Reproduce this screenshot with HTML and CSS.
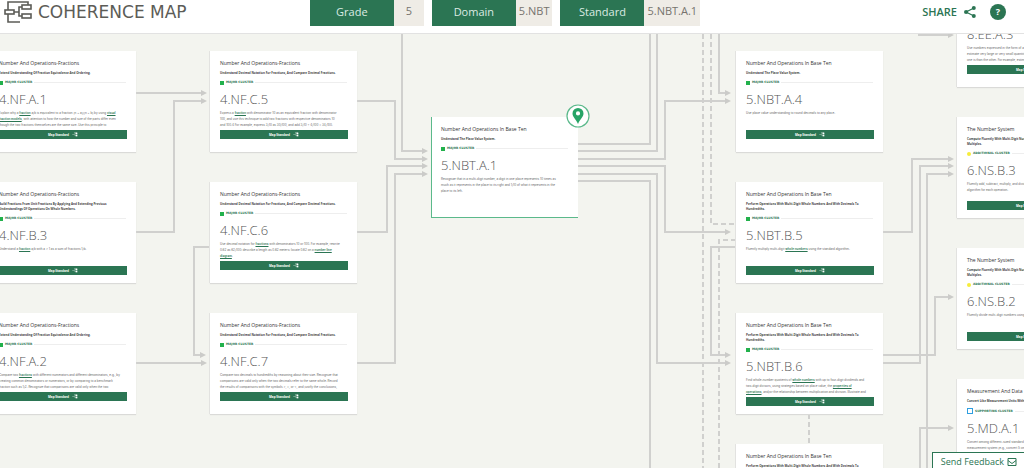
FILE: index.html
```html
<!DOCTYPE html>
<html lang="en">
<head>
<meta charset="utf-8">
<title>Coherence Map</title>
<link rel="stylesheet" href="styles.css">
</head>
<body>
<svg class="defs" aria-hidden="true">
  <symbol id="tree" viewBox="0 0 28 24">
    <g fill="none" stroke="currentColor" stroke-width="1.6">
      <path d="M1 12h10M18 7h-5v10h5M9 3h15"/>
      <rect x="18" y="4" width="9" height="6"/>
      <rect x="18" y="14" width="9" height="6"/>
    </g>
  </symbol>
</svg>
<header class="header">
  <a class="brand" href="#">
    <svg class="brand-icon" viewBox="0 0 28 24" aria-hidden="true">
      <g fill="none" stroke="#5c5c57" stroke-width="1.6">
        <path d="M4 10V2h20v3M4 14v8h12M10 12h5M18 7h-3v9h3"/>
        <rect x="1" y="10" width="9" height="4"/>
        <rect x="18" y="5" width="9" height="4"/>
        <rect x="18" y="14" width="9" height="4"/>
      </g>
    </svg>
    <span>COHERENCE MAP</span>
  </a>
  <nav class="crumbs">
    <div class="crumb"><button type="button">Grade</button><span>5</span></div>
    <div class="crumb"><button type="button">Domain</button><span>5.NBT</span></div>
    <div class="crumb"><button type="button">Standard</button><span>5.NBT.A.1</span></div>
  </nav>
  <div class="tools">
    <button class="share" type="button">SHARE
      <svg viewBox="0 0 12 12" aria-hidden="true"><path d="M10 2L2 6l8 4" fill="none" stroke="#2b7553" stroke-width="1.2"/><g fill="#2b7553"><circle cx="9.8" cy="2.1" r="2"/><circle cx="2.1" cy="6" r="2.1"/><circle cx="9.8" cy="9.9" r="2"/></g></svg>
    </button>
    <button class="help" type="button" aria-label="Help">?</button>
  </div>
</header>

<main class="map">
  <svg class="links" viewBox="0 34 1024 434" aria-hidden="true">
    <defs>
      <marker id="arrow" markerUnits="userSpaceOnUse" markerWidth="6" markerHeight="6" refX="1" refY="3" orient="auto"><path d="M0 0L6 3L0 6Z" fill="#cbcbc9"/></marker>
    </defs>
    <g class="solid arrows">
      <path d="M136 93H202"/>
      <path d="M136 232H174V101H202"/>
      <path d="M210 247H194V355H201"/>
      <path d="M136 363H202"/>
      <path d="M402 30V151H423"/>
      <path d="M357 101H395V159H423"/>
      <path d="M357 232H387V166H423"/>
      <path d="M357 363H395V174H423"/>
      <path d="M578 159H665V101H726"/>
      <path d="M578 166H665V232H726"/>
      <path d="M578 174H657V363H726"/>
      <path d="M719 30V93H726"/>
      <path d="M736 247H711V355H726"/>
      <path d="M883 232H912V159H949"/>
      <path d="M883 363H920V166H949"/>
      <path d="M927 468V174H949"/>
      <path d="M883 355H935V297H949"/>
      <path d="M920 468V428H949"/>
      <path d="M919 30V35H949"/>
    </g>
    <g class="solid">
      <path d="M578 144H650V30"/>
      <path d="M578 151H657V30"/>
      <path d="M578 181H650V468"/>
    </g>
    <g class="dashed">
      <path d="M703 34V468"/>
      <path d="M711 34V224H736"/>
      <path d="M736 240H719V468"/>
      <path d="M809 414V444"/>
    </g>
  </svg>

  <article class="card c0 r1">
    <h2>Number And Operations-Fractions</h2>
    <h3>Extend Understanding Of Fraction Equivalence And Ordering.</h3>
    <p class="cluster major">MAJOR CLUSTER</p>
    <p class="code">4.NF.A.1</p>
    <p class="text">Explain why a <a href="#">fraction</a> a/b is equivalent to a fraction (n × a)/(n × b) by using <a href="#">visual</a><br><a href="#">fraction models</a>, with attention to how the number and size of the parts differ even<br>though the two fractions themselves are the same size. Use this principle to</p>
    <button type="button">Map Standard <svg><use href="#tree"/></svg></button>
  </article>
  <article class="card c0 r2">
    <h2>Number And Operations-Fractions</h2>
    <h3>Build Fractions From Unit Fractions By Applying And Extending Previous<br>Understandings Of Operations On Whole Numbers.</h3>
    <p class="cluster major">MAJOR CLUSTER</p>
    <p class="code">4.NF.B.3</p>
    <p class="text">Understand a <a href="#">fraction</a> a/b with a &gt; 1 as a sum of fractions 1/b.</p>
    <button type="button">Map Standard <svg><use href="#tree"/></svg></button>
  </article>
  <article class="card c0 r3">
    <h2>Number And Operations-Fractions</h2>
    <h3>Extend Understanding Of Fraction Equivalence And Ordering.</h3>
    <p class="cluster major">MAJOR CLUSTER</p>
    <p class="code">4.NF.A.2</p>
    <p class="text">Compare two <a href="#">fractions</a> with different numerators and different denominators, e.g., by<br>creating common denominators or numerators, or by comparing to a benchmark<br>fraction such as 1/2. Recognize that comparisons are valid only when the two</p>
    <button type="button">Map Standard <svg><use href="#tree"/></svg></button>
  </article>

  <article class="card c1 r1">
    <h2>Number And Operations-Fractions</h2>
    <h3>Understand Decimal Notation For Fractions, And Compare Decimal Fractions.</h3>
    <p class="cluster major">MAJOR CLUSTER</p>
    <p class="code">4.NF.C.5</p>
    <p class="text">Express a <a href="#">fraction</a> with denominator 10 as an equivalent fraction with denominator<br>100, and use this technique to add two fractions with respective denominators 10<br>and 100.4 For example, express 3/10 as 30/100, and add 3/10 + 4/100 = 34/100.</p>
    <button type="button">Map Standard <svg><use href="#tree"/></svg></button>
  </article>
  <article class="card c1 r2">
    <h2>Number And Operations-Fractions</h2>
    <h3>Understand Decimal Notation For Fractions, And Compare Decimal Fractions.</h3>
    <p class="cluster major">MAJOR CLUSTER</p>
    <p class="code">4.NF.C.6</p>
    <p class="text">Use decimal notation for <a href="#">fractions</a> with denominators 10 or 100. For example, rewrite<br>0.62 as 62/100; describe a length as 0.62 meters; locate 0.62 on a <a href="#">number line</a><br><a href="#">diagram</a>.</p>
    <button type="button">Map Standard <svg><use href="#tree"/></svg></button>
  </article>
  <article class="card c1 r3">
    <h2>Number And Operations-Fractions</h2>
    <h3>Understand Decimal Notation For Fractions, And Compare Decimal Fractions.</h3>
    <p class="cluster major">MAJOR CLUSTER</p>
    <p class="code">4.NF.C.7</p>
    <p class="text">Compare two decimals to hundredths by reasoning about their size. Recognize that<br>comparisons are valid only when the two decimals refer to the same whole. Record<br>the results of comparisons with the symbols &gt;, =, or &lt;, and justify the conclusions,</p>
    <button type="button">Map Standard <svg><use href="#tree"/></svg></button>
  </article>

  <article class="card current">
    <h2>Number And Operations In Base Ten</h2>
    <h3>Understand The Place Value System.</h3>
    <p class="cluster major">MAJOR CLUSTER</p>
    <p class="code">5.NBT.A.1</p>
    <p class="text">Recognize that in a multi-digit number, a digit in one place represents 10 times as<br>much as it represents in the place to its right and 1/10 of what it represents in the<br>place to its left.</p>
    <svg class="pin" viewBox="0 0 24 24" aria-hidden="true"><circle cx="12" cy="12" r="11" fill="#fff" stroke="#5bb98b" stroke-width="1.2"/><path fill-rule="evenodd" fill="#27a567" d="M12 4a5.500 5.500 0 0 0-5.500 5.500C6.500 13 10 15 12 20c2-5 5.500-7 5.500-10.500A5.500 5.500 0 0 0 12 4zm0 3.300a2.100 2.100 0 1 1 0 4.200a2.100 2.100 0 0 1 0-4.200z"/></svg>
  </article>

  <article class="card c2 r1">
    <h2>Number And Operations In Base Ten</h2>
    <h3>Understand The Place Value System.</h3>
    <p class="cluster major">MAJOR CLUSTER</p>
    <p class="code">5.NBT.A.4</p>
    <p class="text">Use place value understanding to round decimals to any place.</p>
    <button type="button">Map Standard <svg><use href="#tree"/></svg></button>
  </article>
  <article class="card c2 r2">
    <h2>Number And Operations In Base Ten</h2>
    <h3>Perform Operations With Multi-Digit Whole Numbers And With Decimals To<br>Hundredths.</h3>
    <p class="cluster major">MAJOR CLUSTER</p>
    <p class="code">5.NBT.B.5</p>
    <p class="text">Fluently multiply multi-digit <a href="#">whole numbers</a> using the standard algorithm.</p>
    <button type="button">Map Standard <svg><use href="#tree"/></svg></button>
  </article>
  <article class="card c2 r3">
    <h2>Number And Operations In Base Ten</h2>
    <h3>Perform Operations With Multi-Digit Whole Numbers And With Decimals To<br>Hundredths.</h3>
    <p class="cluster major">MAJOR CLUSTER</p>
    <p class="code">5.NBT.B.6</p>
    <p class="text">Find whole-number quotients of <a href="#">whole numbers</a> with up to four-digit dividends and<br>two-digit divisors, using strategies based on place value, the <a href="#">properties of</a><br><a href="#">operations</a>, and/or the relationship between multiplication and division. Illustrate and</p>
    <button type="button">Map Standard <svg><use href="#tree"/></svg></button>
  </article>
  <article class="card c2 r4">
    <h2>Number And Operations In Base Ten</h2>
    <h3>Perform Operations With Multi-Digit Whole Numbers And With Decimals To</h3>
  </article>

  <article class="card c3 s0">
    <h2>Expressions And Equations</h2>
    <h3>Work With Radicals And Integer Exponents.</h3>
    <p class="cluster major">MAJOR CLUSTER</p>
    <p class="code">8.EE.A.3</p>
    <p class="text">Use numbers expressed in the form of a single digit times an integer power of 10 to<br>estimate very large or very small quantities, and to express how many times as much<br>one is than the other. For example, estimate the population of the United States</p>
    <button type="button">Map Standard <svg><use href="#tree"/></svg></button>
  </article>
  <article class="card c3 s1">
    <h2>The Number System</h2>
    <h3>Compute Fluently With Multi-Digit Numbers And Find Common Factors And<br>Multiples.</h3>
    <p class="cluster additional">ADDITIONAL CLUSTER</p>
    <p class="code">6.NS.B.3</p>
    <p class="text">Fluently add, subtract, multiply, and divide multi-digit decimals using the standard<br>algorithm for each operation.</p>
    <button type="button">Map Standard <svg><use href="#tree"/></svg></button>
  </article>
  <article class="card c3 s2">
    <h2>The Number System</h2>
    <h3>Compute Fluently With Multi-Digit Numbers And Find Common Factors And<br>Multiples.</h3>
    <p class="cluster additional">ADDITIONAL CLUSTER</p>
    <p class="code">6.NS.B.2</p>
    <p class="text">Fluently divide multi-digit numbers using the standard algorithm.</p>
    <button type="button">Map Standard <svg><use href="#tree"/></svg></button>
  </article>
  <article class="card c3 s3">
    <h2>Measurement And Data</h2>
    <h3>Convert Like Measurement Units Within A Given Measurement System.</h3>
    <p class="cluster supporting">SUPPORTING CLUSTER</p>
    <p class="code">5.MD.A.1</p>
    <p class="text">Convert among different-sized standard measurement units within a given<br>measurement system (e.g., convert 5 cm to 0.05 m), and use these conversions in<br>solving multi-step, real world problems.</p>
    <button type="button">Map Standard <svg><use href="#tree"/></svg></button>
  </article>
</main>

<button class="feedback" type="button">Send Feedback
  <svg viewBox="0 0 10 10" aria-hidden="true"><path d="M1 1.500h8v7H1zM1 3.500l4 3l4-3" fill="none" stroke="#2b7553"/></svg>
</button>
</body>
</html>
```
FILE: styles.css
```css
* { box-sizing: border-box; }
body {
  margin: 0;
  height: 100vh;
  display: flex;
  flex-direction: column;
  overflow: hidden;
  background: #f3f4ef;
  font-family: "Open Sans", "Noto Sans", sans-serif;
  color: #555;
}
button { font-family: inherit; border: 0; cursor: pointer; }
h2, h3, p { margin: 0; }
.defs { display: none; }

.header {
  display: grid;
  grid-template-columns: 1fr auto 1fr;
  align-items: start;
  height: 34px;
  flex: none;
  padding: 0 18px 0 4px;
  background: #fff;
  border-bottom: 1px solid #e2e2e2;
}
.brand {
  display: flex;
  align-items: center;
  gap: 6px;
  height: 24px;
  color: #5c5c57;
  font-family: "DejaVu Sans", sans-serif;
  font-size: 17px;
  text-decoration: none;
  white-space: nowrap;
}
.brand-icon { width: 28px; height: 24px; }
.crumbs { display: flex; gap: 8px; }
.crumb {
  display: flex;
  height: 26px;
  background: #efece6;
  font-size: 11px;
  line-height: 22px;
}
.crumb button {
  width: 84px;
  padding: 0 0 4px;
  background: #2b7553;
  color: #dcebe3;
  font-size: 11px;
}
.crumb span { min-width: 30px; padding: 0 3px; text-align: center; color: #77746e; }
.tools {
  display: flex;
  justify-content: flex-end;
  align-items: center;
  gap: 14px;
  height: 23px;
}
.share {
  display: flex;
  align-items: center;
  gap: 7px;
  padding: 0;
  background: none;
  color: #2b7553;
  font-size: 11px;
  font-weight: 600;
}
.share svg { width: 12px; height: 12px; }
.help {
  width: 16px;
  height: 16px;
  padding: 0;
  border-radius: 50%;
  background: #2b7553;
  color: #fff;
  font-size: 9px;
  font-weight: 700;
  line-height: 16px;
}

.map { position: relative; flex: 1; overflow: hidden; }
.links { position: absolute; top: 0; left: 0; width: 1024px; height: 434px; }
.links path { fill: none; }
.links marker path { fill: #cbcbc9; }
.solid path, .dashed path { stroke: #d0d0ce; stroke-width: 2px; }
.arrows > path { marker-end: url(#arrow); }
.dashed path { stroke-dasharray: 5 3; }

.card {
  position: absolute;
  width: 147px;
  height: 101px;
  padding: 9px 10px;
  background: #fff;
  box-shadow: 0 1px 1px #dadad8, -1px 0 0 #e4e4e1;
  white-space: nowrap;
  overflow: hidden;
}
.c0 { left: -11px; }
.c1 { left: 210px; }
.c2 { left: 736px; }
.c3 { left: 957px; }
.r1 { top: 17px; }
.r2 { top: 148px; }
.r3 { top: 279px; }
.r4 { top: 410px; }
.s0 { top: -48px; }
.s1 { top: 83px; }
.s2 { top: 214px; }
.s3 { top: 345px; }
.current {
  left: 431px;
  top: 83px;
  padding-left: 9px;
  border-left: 1px solid #5bb98b;
  border-bottom: 1px solid #5bb98b;
  box-shadow: none;
  overflow: visible;
}
.pin { position: absolute; top: -13px; right: -12px; width: 24px; height: 24px; }

.card h2 { font-size: 5px; line-height: 6px; font-weight: 400; color: #333; }
.card h3 { margin-top: 5px; font-size: 3px; line-height: 5px; font-weight: 700; color: #444; }
.cluster {
  display: flex;
  align-items: center;
  gap: 2px;
  margin-top: 4px;
  font-family: "DejaVu Sans", sans-serif;
  font-size: 3px;
  line-height: 5px;
  font-weight: 700;
  color: #2b7553;
}
.cluster::before { content: ""; flex: none; width: 4px; height: 4px; background: #22b14c; }
.cluster::after { content: ""; flex: 1; height: 1px; background: #eee; }
.cluster.additional::before { background: #f6ec3c; border-radius: 50%; }
.cluster.supporting::before { background: #fff; border: 1px solid #2f9fe0; }
.code { margin-top: 6px; font-size: 13px; line-height: 17px; font-weight: 300; color: #555; }
.text { margin-top: 2px; height: 18px; font-family: Inter, sans-serif; font-size: 3px; line-height: 6px; color: #666; }
.text a { color: #2b7553; font-weight: 600; text-decoration: underline; }
.card button {
  display: flex;
  justify-content: center;
  align-items: center;
  gap: 3px;
  width: 128px;
  height: 9px;
  margin-top: 2px;
  padding: 0;
  background: #2b7553;
  color: #fff;
  font-size: 3px;
  font-weight: 700;
}
.card button svg { width: 6px; height: 5px; }

.feedback {
  position: fixed;
  right: -1px;
  bottom: -3px;
  display: flex;
  align-items: center;
  gap: 3px;
  height: 19px;
  padding: 0 7px 0 8px;
  border: 1px solid #2b7553;
  background: #fff;
  color: #2b7553;
  font-size: 9px;
}
.feedback svg { width: 10px; height: 10px; }
```
